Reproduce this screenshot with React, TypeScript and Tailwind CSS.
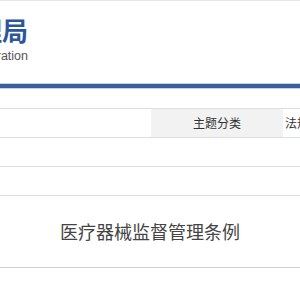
const ROWS = [
  { label: "主题分类", value: "法规文件" },
  { label: "", value: "" },
  { label: "", value: "" },
];

export default function App() {
  return (
    <div
      className="h-[300px] w-[300px] overflow-hidden bg-white"
      style={{ fontFamily: '"Noto Sans CJK SC", "Liberation Sans", sans-serif' }}
    >
      <div className="h-px bg-[#e6e6e6]" />

      {/* 站点抬头，左侧被截断 */}
      <div className="flex h-[82px] w-[28px] justify-end pt-[14px]">
        <div className="flex shrink-0 flex-col items-end whitespace-nowrap">
          <span className="text-[26px] font-bold leading-[30px] text-[#2b569b]">
            国家药品监督管理局
          </span>
          <span
            className="mt-[3px] text-[12.5px] leading-[16px] text-[#555]"
            style={{ fontFamily: '"Liberation Sans", sans-serif' }}
          >
            National Medical Products Administration
          </span>
        </div>
      </div>

      <div className="h-[6px] border-y border-[#b9d3ef] bg-[#3a5e9b]" />

      <div className="mt-[19px]">
        <div className="border-t border-[#dedede]">
          {ROWS.map((row, i) => (
            <div
              key={i}
              className="flex h-[29px] border-b border-[#dedede] text-[12px] text-[#333]"
            >
              <div className="w-[151px] shrink-0" />
              <div
                className={
                  "flex w-[132px] shrink-0 items-center justify-center " +
                  (i === 0 ? "bg-[#f2f2f2]" : "")
                }
              >
                {row.label}
              </div>
              <div className="flex items-center whitespace-nowrap pl-[2px]">{row.value}</div>
            </div>
          ))}
        </div>

        <div className="flex h-[72px] items-center justify-center border-b border-[#cfcfcf] text-[18px] text-[#444]">
          医疗器械监督管理条例
        </div>
      </div>
    </div>
  );
}
